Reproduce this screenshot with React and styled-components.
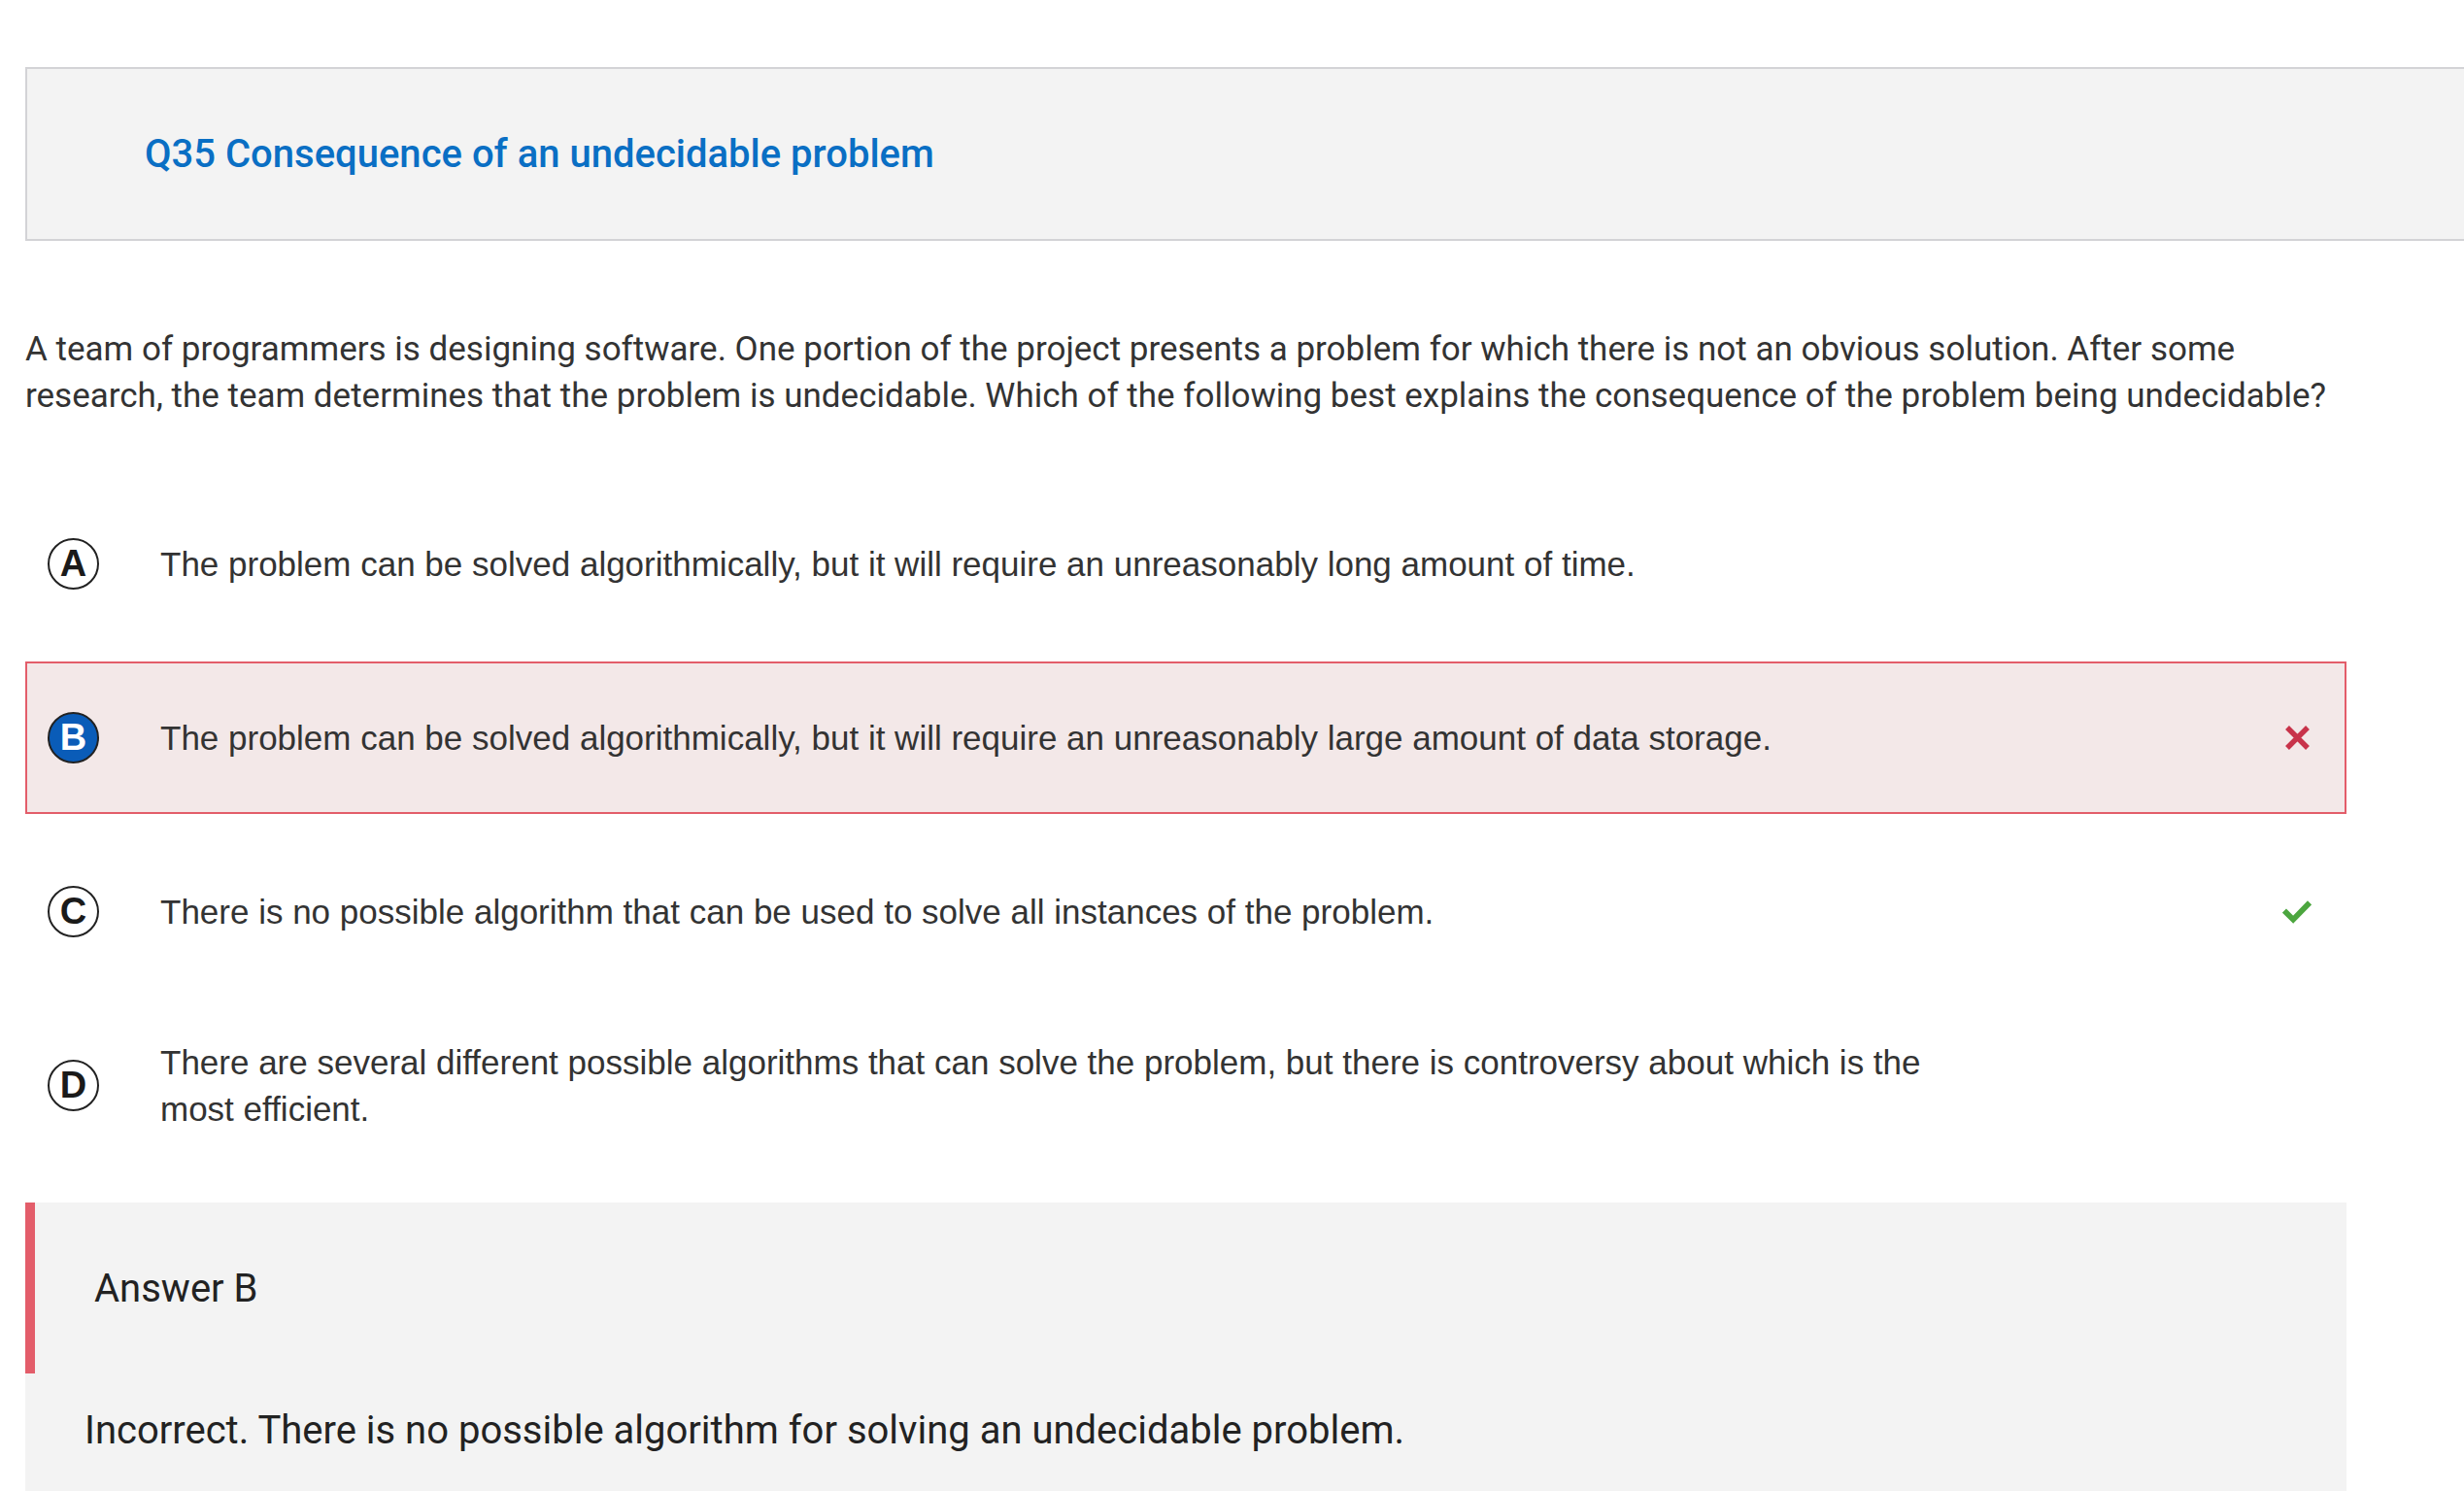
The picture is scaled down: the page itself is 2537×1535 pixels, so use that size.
import React from "react";
import styled, { createGlobalStyle } from "styled-components";

const GlobalStyle = createGlobalStyle`
  html, body {
    margin: 0;
    padding: 0;
    background: #ffffff;
    overflow: hidden;
  }
  body {
    font-family: Roboto, "Liberation Sans", Arial, sans-serif;
  }
`;

const Page = styled.div`
  padding: 69px 0 0 26px;
  width: 2390px;
`;

const Header = styled.div`
  box-sizing: border-box;
  width: 2600px;
  height: 179px;
  background: #f3f3f3;
  border: 2px solid #d3d3d6;
  display: flex;
  align-items: center;
  padding-left: 121px;
`;

const Title = styled.h1`
  margin: 0;
  font-family: Roboto, sans-serif;
  font-weight: 500;
  font-size: 40px;
  color: #0a6fc4;
`;

const Question = styled.p`
  margin: 88px 0 0;
  font-family: Roboto, sans-serif;
  font-size: 35px;
  line-height: 48px;
  color: #333333;
  max-width: 2390px;
`;

const Options = styled.div`
  margin-top: 70px;
  display: flex;
  flex-direction: column;
  gap: 22px;
`;

const OptionRow = styled.div`
  box-sizing: border-box;
  min-height: 157px;
  display: flex;
  align-items: center;
  padding: 0 34px 0 21px;
  border: 2px solid ${(p) => (p.$wrong ? "#e35d6a" : "transparent")};
  background: ${(p) => (p.$wrong ? "#f3e8e8" : "transparent")};
`;

const Letter = styled.span`
  box-sizing: border-box;
  flex: 0 0 auto;
  width: 53px;
  height: 53px;
  border-radius: 50%;
  border: 2px solid #222222;
  display: flex;
  align-items: center;
  justify-content: center;
  font-family: "Liberation Sans", Arial, sans-serif;
  font-weight: 700;
  font-size: 38px;
  color: ${(p) => (p.$selected ? "#ffffff" : "#1a1a1a")};
  background: ${(p) => (p.$selected ? "#0a5cb8" : "transparent")};
`;

const OptionText = styled.div`
  flex: 0 1 1840px;
  margin-left: 63px;
  font-family: "Liberation Sans", Arial, sans-serif;
  font-size: 35px;
  line-height: 48px;
  color: #333333;
`;

const Mark = styled.span`
  margin-left: auto;
  width: 30px;
  height: 30px;
  display: flex;
  align-items: center;
  justify-content: center;
`;

const AnswerBox = styled.div`
  margin-top: 42px;
  background: #f3f3f3;
  padding-bottom: 60px;
`;

const AnswerHead = styled.div`
  height: 176px;
  border-left: 10px solid #e35d6a;
  display: flex;
  align-items: center;
  padding-left: 61px;
  font-family: Roboto, sans-serif;
  font-size: 40px;
  color: #222222;
`;

const Explanation = styled.p`
  margin: 0;
  padding: 35px 0 0 61px;
  font-family: Roboto, sans-serif;
  font-size: 40px;
  line-height: 48px;
  color: #222222;
`;

const CrossIcon = () => (
  <svg width="27" height="27" viewBox="0 0 27 27">
    <path d="M3 3 L24 24 M24 3 L3 24" stroke="#c8334a" strokeWidth="5.5" />
  </svg>
);

const CheckIcon = () => (
  <svg width="31" height="25" viewBox="0 0 31 25">
    <path d="M2 11.5 L11.5 21 L29 3" stroke="#4ca63f" strokeWidth="6" fill="none" />
  </svg>
);

const options = [
  {
    key: "A",
    text: "The problem can be solved algorithmically, but it will require an unreasonably long amount of time.",
  },
  {
    key: "B",
    text: "The problem can be solved algorithmically, but it will require an unreasonably large amount of data storage.",
    selected: true,
    wrong: true,
  },
  {
    key: "C",
    text: "There is no possible algorithm that can be used to solve all instances of the problem.",
    correct: true,
  },
  {
    key: "D",
    text: "There are several different possible algorithms that can solve the problem, but there is controversy about which is the most efficient.",
  },
];

export default function App() {
  return (
    <>
      <GlobalStyle />
      <Page>
        <Header>
          <Title>Q35 Consequence of an undecidable problem</Title>
        </Header>
        <Question>
          A team of programmers is designing software. One portion of the project presents a problem for which there is
          not an obvious solution. After some research, the team determines that the problem is undecidable. Which of the
          following best explains the consequence of the problem being undecidable?
        </Question>
        <Options>
          {options.map((o) => (
            <OptionRow key={o.key} $wrong={o.wrong}>
              <Letter $selected={o.selected}>{o.key}</Letter>
              <OptionText>{o.text}</OptionText>
              {o.wrong && (
                <Mark>
                  <CrossIcon />
                </Mark>
              )}
              {o.correct && (
                <Mark>
                  <CheckIcon />
                </Mark>
              )}
            </OptionRow>
          ))}
        </Options>
        <AnswerBox>
          <AnswerHead>Answer B</AnswerHead>
          <Explanation>Incorrect. There is no possible algorithm for solving an undecidable problem.</Explanation>
        </AnswerBox>
      </Page>
    </>
  );
}
